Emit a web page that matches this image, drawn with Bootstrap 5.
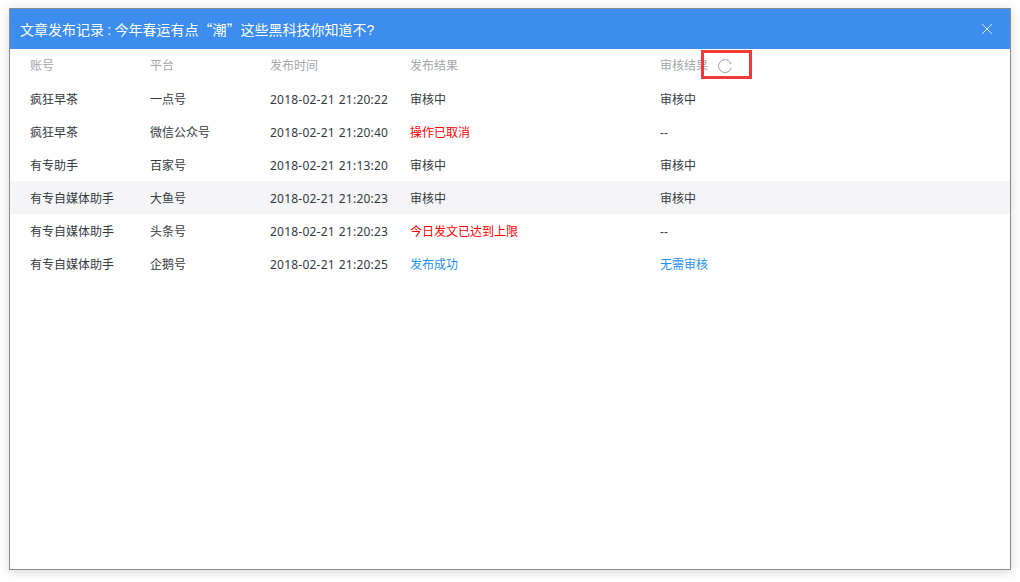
<!DOCTYPE html>
<html lang="zh-CN">
<head>
<meta charset="utf-8">
<title>文章发布记录</title>
<link href="https://cdn.jsdelivr.net/npm/bootstrap@5.3.0/dist/css/bootstrap.min.css" rel="stylesheet">
<style>
html,body{height:100%;background:#fff;}
body{padding:8px 9px 12px;font-family:"Liberation Sans","Noto Sans CJK SC",sans-serif;font-size:12px;color:#33393f;}
.pub-window{height:562px;border:1px solid #8c8c8c;border-radius:0;box-shadow:0 2px 10px rgba(0,0,0,.16);background:#fff;}
.pub-head{height:40px;background:#3c8dee;color:#fff;font-size:14px;padding:2px 15px 0 10px;word-spacing:-.6px;}
.pub-q{font-family:"Noto Sans CJK SC",sans-serif;}
.pub-close{width:16px;height:16px;display:block;margin-top:-2px;}
.pub-row{height:33px;padding-left:20px;padding-top:2px;}
.pub-row.pub-th{padding-top:0;}
.pub-row.pub-hl{background:#f5f5f7;}
.pub-c1{width:120px;}
.pub-c2{width:120px;}
.pub-c3{width:140px;font-family:"Noto Sans","Noto Sans CJK SC",sans-serif;letter-spacing:.22px;word-spacing:.6px;}
.pub-c4{width:250px;}
.pub-th{color:#a3a6ab;}
.pub-th .pub-c3{font-family:inherit;letter-spacing:0;word-spacing:0;}
.pub-red{color:#f00;}
.pub-blue{color:#1e90f0;}
.pub-refresh{width:16px;height:16px;margin-left:9px;}
.pub-anchor{position:relative;}
.pub-mark{position:absolute;left:41px;top:-7px;width:51px;height:29px;border:3px solid #f23a3a;}
</style>
</head>
<body>
<div class="pub-window d-flex flex-column">
  <div class="pub-head d-flex align-items-center justify-content-between">
    <span>文章发布记录 : 今年春运有点<span class="pub-q">“</span>潮<span class="pub-q">”</span>这些黑科技你知道不?</span>
    <svg class="pub-close" viewBox="0 0 16 16" fill="none" stroke="#dbe9fb" stroke-width="1"><path d="M3 3l10 10M13 3L3 13"/></svg>
  </div>
  <div class="pub-row pub-th d-flex align-items-center">
    <div class="pub-c1">账号</div><div class="pub-c2">平台</div><div class="pub-c3">发布时间</div><div class="pub-c4">发布结果</div>
    <div class="pub-anchor d-flex align-items-center">审核结果
      <svg class="pub-refresh" viewBox="0 0 16 16" fill="none" stroke="#9aa3b5" stroke-width="1"><path d="M12.6 3.4A6.5 6.5 0 1 0 14.3 9.8"/><path d="M11.8 4.4h3.2l-1.6 2.2z" stroke="none" fill="#9aa3b5"/></svg>
      <span class="pub-mark"></span>
    </div>
  </div>
  <div class="pub-row d-flex align-items-center"><div class="pub-c1">疯狂早茶</div><div class="pub-c2">一点号</div><div class="pub-c3">2018-02-21 21:20:22</div><div class="pub-c4">审核中</div><div>审核中</div></div>
  <div class="pub-row d-flex align-items-center"><div class="pub-c1">疯狂早茶</div><div class="pub-c2">微信公众号</div><div class="pub-c3">2018-02-21 21:20:40</div><div class="pub-c4 pub-red">操作已取消</div><div>--</div></div>
  <div class="pub-row d-flex align-items-center"><div class="pub-c1">有专助手</div><div class="pub-c2">百家号</div><div class="pub-c3">2018-02-21 21:13:20</div><div class="pub-c4">审核中</div><div>审核中</div></div>
  <div class="pub-row pub-hl d-flex align-items-center"><div class="pub-c1">有专自媒体助手</div><div class="pub-c2">大鱼号</div><div class="pub-c3">2018-02-21 21:20:23</div><div class="pub-c4">审核中</div><div>审核中</div></div>
  <div class="pub-row d-flex align-items-center"><div class="pub-c1">有专自媒体助手</div><div class="pub-c2">头条号</div><div class="pub-c3">2018-02-21 21:20:23</div><div class="pub-c4 pub-red">今日发文已达到上限</div><div>--</div></div>
  <div class="pub-row d-flex align-items-center"><div class="pub-c1">有专自媒体助手</div><div class="pub-c2">企鹅号</div><div class="pub-c3">2018-02-21 21:20:25</div><div class="pub-c4 pub-blue">发布成功</div><div class="pub-blue">无需审核</div></div>
</div>
<script src="https://cdn.jsdelivr.net/npm/bootstrap@5.3.0/dist/js/bootstrap.bundle.min.js"></script>
</body>
</html>
